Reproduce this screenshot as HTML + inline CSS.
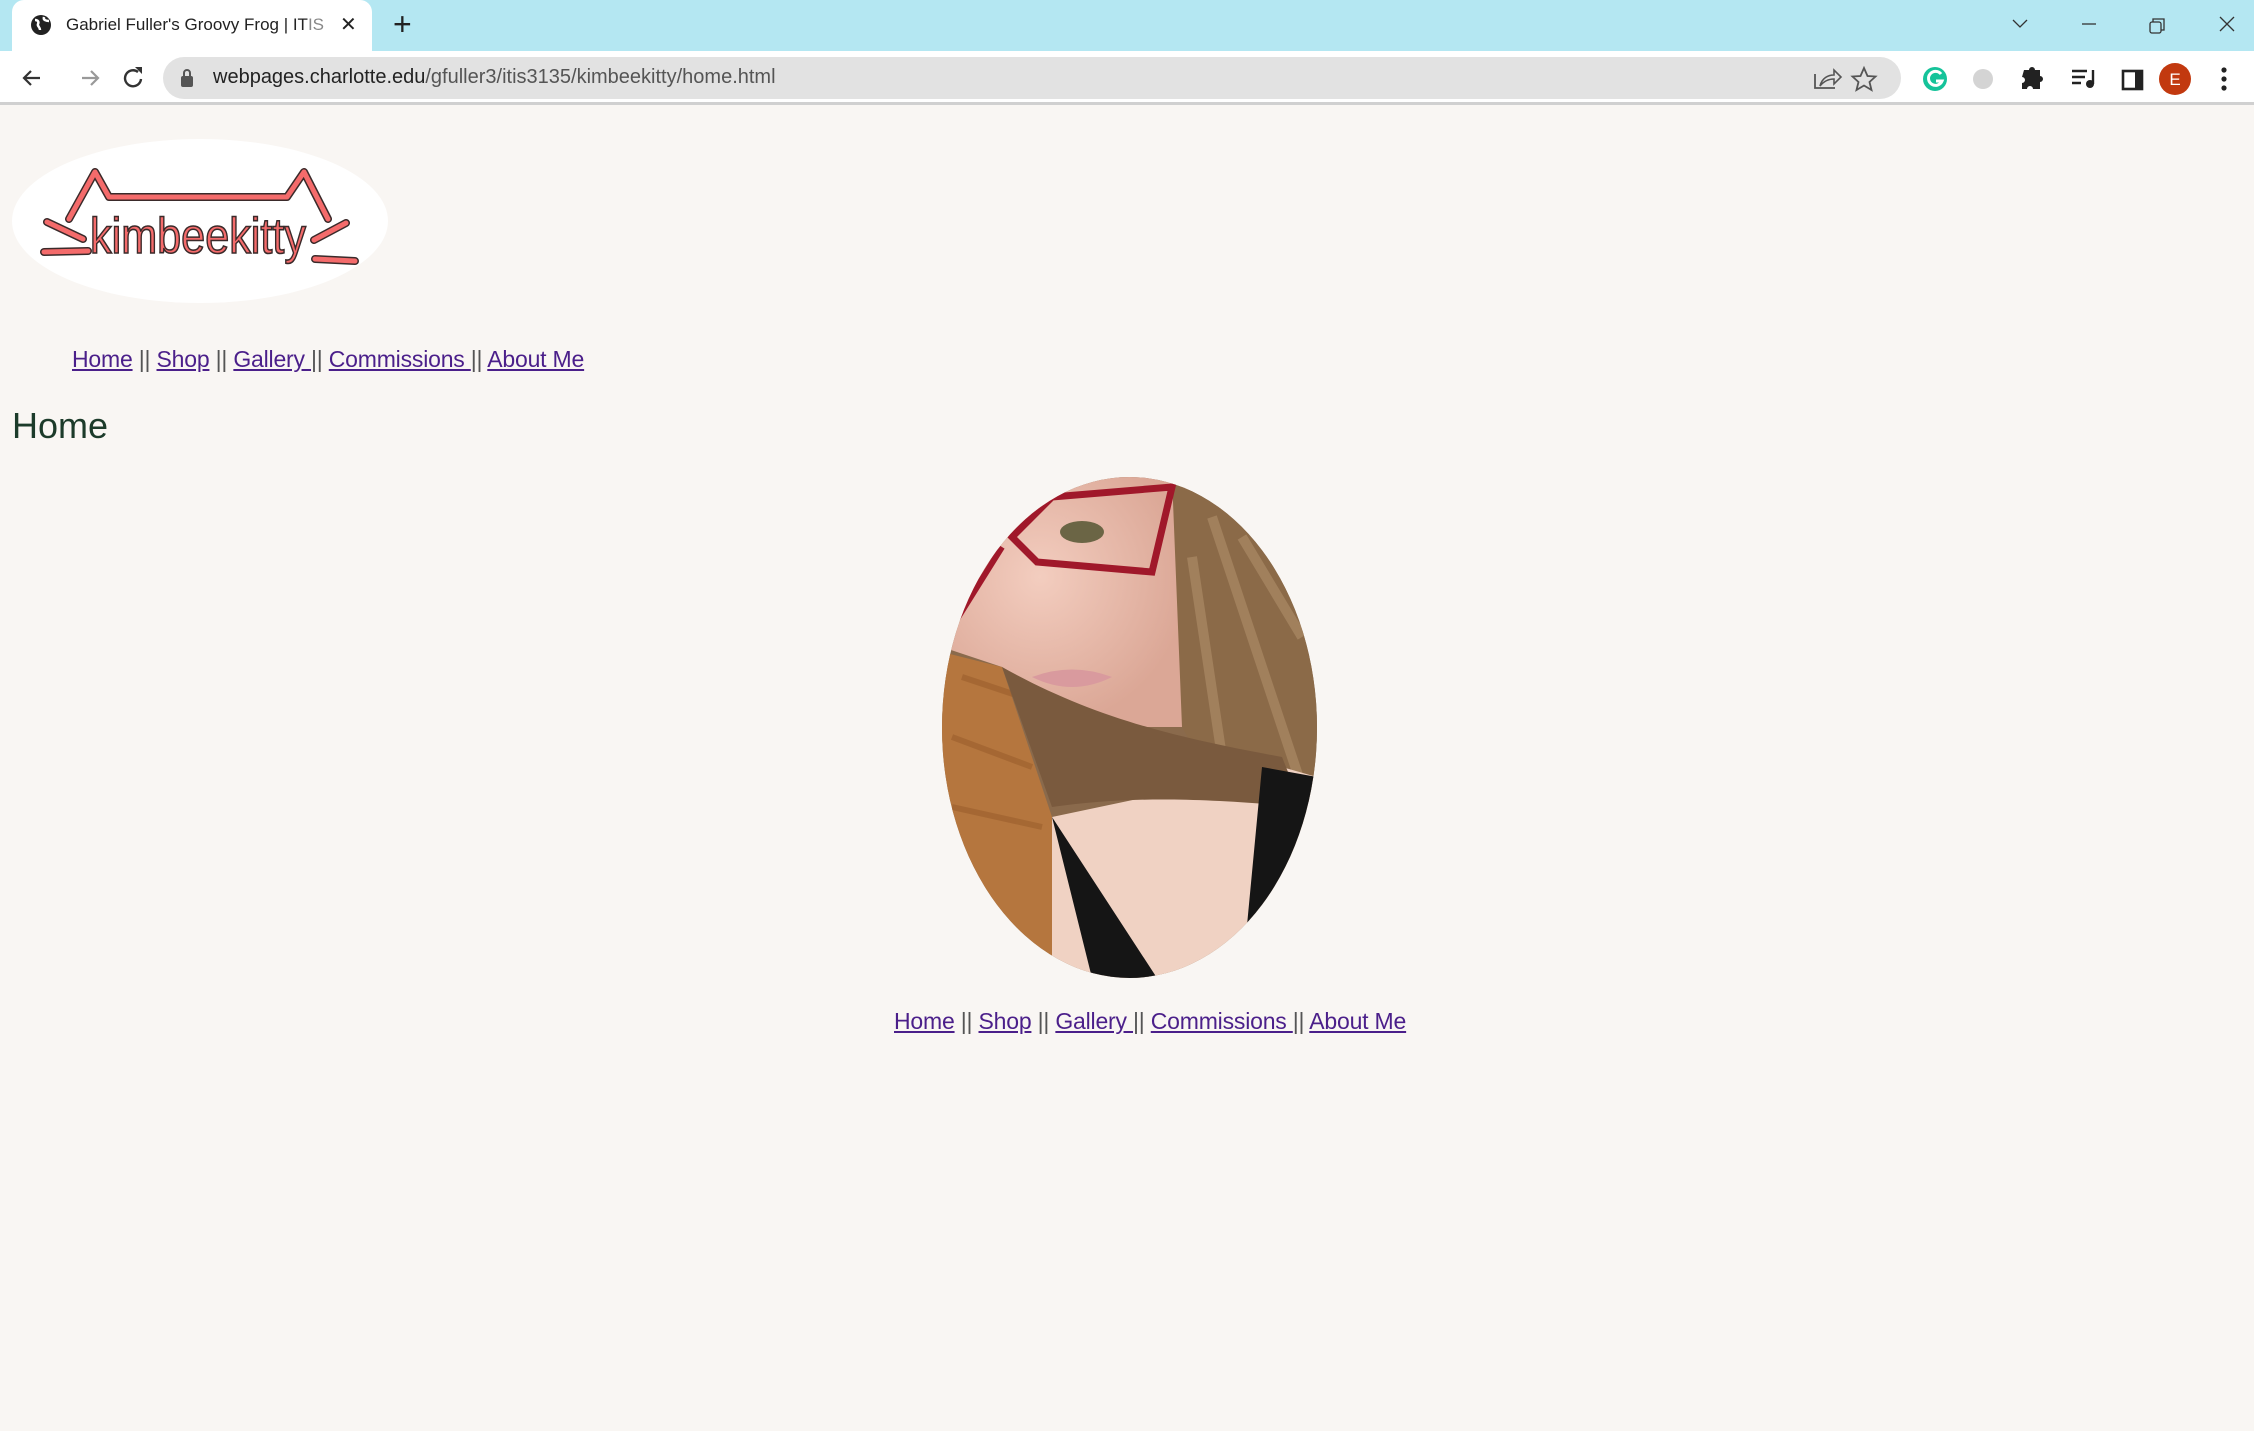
<!DOCTYPE html>
<html><head><meta charset="utf-8"><style>
*{margin:0;padding:0;box-sizing:border-box}
body{width:2254px;height:1431px;background:#f9f6f3;font-family:"Liberation Sans",sans-serif;position:relative;overflow:hidden}
.abs{position:absolute}
.tabbar{left:0;top:0;width:2254px;height:51px;background:#b4e7f2}
.tab{left:12px;top:0;width:360px;height:51px;background:#fff;border-radius:12px 12px 0 0}
.toolbar{left:0;top:51px;width:2254px;height:54px;background:#fff;border-bottom:3px solid #d0d0d0}
.addr{left:163px;top:57px;width:1738px;height:42px;background:#e2e2e2;border-radius:21px}
.nav{font-size:23px;color:#555;white-space:pre;letter-spacing:-0.2px}
.nav a{color:#4b1f8a;text-decoration:underline}
</style></head><body>
<div class="abs tabbar"></div>
<div class="abs tab"></div>
<svg class="abs" style="left:29px;top:13px" width="24" height="24" viewBox="0 0 24 24"><circle cx="12" cy="12" r="10" fill="#222"/><path d="M6 7c3 0 4 2 3 4s2 3 2 6M15 4c-1 3 2 4 5 4" stroke="#fff" stroke-width="2.5" fill="none"/></svg>
<div class="abs" style="left:66px;top:15px;font-size:17px;color:#222">Gabriel Fuller's Groovy Frog | IT<span style="color:#888">IS</span></div>
<div class="abs" style="left:340px;top:12px;font-size:20px;color:#222">✕</div>
<div class="abs" style="left:393px;top:6px;font-size:32px;color:#222">+</div>
<svg class="abs" style="left:2005px;top:12px" width="240" height="24"><path d="M8 8l7 7 7-7" stroke="#333" fill="none" stroke-width="1.3"/><path d="M77 12h14" stroke="#333" stroke-width="1.3"/><rect x="145" y="10" width="11" height="11" rx="2" stroke="#333" fill="none" stroke-width="1.3"/><path d="M148 10v-3h11v11h-3" stroke="#333" fill="none" stroke-width="1.3"/><path d="M215 5l14 14M229 5l-14 14" stroke="#333" stroke-width="1.3"/></svg>
<div class="abs toolbar"></div>
<svg class="abs" style="left:18px;top:64px" width="130" height="28"><path d="M22 14H6M13 7l-7 7 7 7" stroke="#333" stroke-width="2.2" fill="none"/><path d="M64 14h16M73 7l7 7-7 7" stroke="#999" stroke-width="2.2" fill="none"/><path d="M120 8A8 8 0 1 0 123 15" stroke="#333" stroke-width="2.4" fill="none"/><path d="M117 3h7v7z" fill="#333"/></svg>
<div class="abs addr"></div>
<svg class="abs" style="left:180px;top:68px" width="14" height="20"><rect x="1" y="8" width="12" height="11" rx="2" fill="#555"/><path d="M4 9V5a3 3 0 0 1 6 0v4" stroke="#555" stroke-width="2" fill="none"/></svg>
<div class="abs" style="left:213px;top:66px;font-size:20px;color:#222">webpages.charlotte.edu<span style="color:#555">/gfuller3/itis3135/kimbeekitty/home.html</span></div>
<svg class="abs" style="left:1812px;top:64px" width="70" height="30"><path d="M3 10v14h20" stroke="#555" stroke-width="1.8" fill="none"/><path d="M8 22c2-8 8-11 14-11V6l7 7-7 7v-5c-5 0-10 2-14 7z" stroke="#555" stroke-width="1.6" fill="none"/><path d="M62 4l3.5 8 8 .5-6 5.5 2 8-7.5-4.5-7.5 4.5 2-8-6-5.5 8-.5z" stroke="#555" stroke-width="1.8" fill="none" transform="translate(-10 0)"/></svg>
<svg class="abs" style="left:1920px;top:62px" width="320" height="34"><circle cx="15" cy="17" r="12" fill="#15c39a"/><path d="M21 12a7 7 0 1 0 1 7h-6" stroke="#fff" stroke-width="3" fill="none"/><circle cx="63" cy="17" r="10" fill="#d4d4d4"/><path d="M108 8h5a3 3 0 0 1 6 0h5v6a3 3 0 0 1 0 6v7h-7a3 3 0 0 0-6 0h-5v-6a3 3 0 0 0 0-6z" fill="#222" transform="translate(-4 0)"/><path d="M152 9h15M152 15h13M152 21h9" stroke="#222" stroke-width="2.4"/><path d="M173 8v14" stroke="#222" stroke-width="2.4"/><circle cx="170" cy="22" r="4" fill="#222"/><rect x="203" y="9" width="19" height="18" stroke="#222" stroke-width="2.6" fill="none"/><rect x="215" y="9" width="7" height="18" fill="#222"/><circle cx="255" cy="17" r="16" fill="#c2390f"/><text x="255" y="23" font-size="17" fill="#fff" text-anchor="middle" font-family="Liberation Sans">E</text><circle cx="304" cy="8" r="2.6" fill="#222"/><circle cx="304" cy="17" r="2.6" fill="#222"/><circle cx="304" cy="26" r="2.6" fill="#222"/></svg>

<svg class="abs" style="left:12px;top:139px" width="378" height="165" viewBox="0 0 378 165">
<ellipse cx="188" cy="82" rx="188" ry="82" fill="#fff"/>
<g stroke="#3a2a2a" stroke-width="8" fill="none" stroke-linecap="round" stroke-linejoin="round">
<path d="M57 80L83 33 97 58H275L292 33 316 80"/><path d="M35 83l36 17M32 113l44-1M334 84l-32 17M303 120l40 2"/></g>
<g stroke="#f46b6b" stroke-width="5" fill="none" stroke-linecap="round" stroke-linejoin="round">
<path d="M57 80L83 33 97 58H275L292 33 316 80"/><path d="M35 83l36 17M32 113l44-1M334 84l-32 17M303 120l40 2"/></g>
<text x="78" y="114" font-family="Liberation Sans Narrow,Liberation Sans,sans-serif" font-size="50" fill="#f46b6b" stroke="#3a2a2a" stroke-width="1.6" textLength="216" lengthAdjust="spacingAndGlyphs">kimbeekitty</text>
</svg>

<div class="abs nav" style="left:72px;top:346px"><a>Home</a> || <a>Shop</a> || <a>Gallery </a>|| <a>Commissions </a>|| <a>About Me</a></div>
<div class="abs" style="left:12px;top:405px;font-size:36px;color:#1c3b2a">Home</div>

<svg class="abs" style="left:942px;top:477px" width="375" height="501" viewBox="0 0 375 501">
<defs><clipPath id="c"><ellipse cx="187.5" cy="250.5" rx="187.5" ry="250.5"/></clipPath>
<radialGradient id="sk" cx="0.4" cy="0.4" r="0.6"><stop offset="0" stop-color="#f3cdbf"/><stop offset="1" stop-color="#dba796"/></radialGradient></defs>
<g clip-path="url(#c)">
<rect width="375" height="501" fill="#8a6a4c"/>
<path d="M0 0H245L240 250 160 250 60 190 0 170z" fill="url(#sk)"/>
<path d="M230 0H375V330L320 300 280 320 240 250z" fill="#8b6a48"/>
<path d="M270 40l40 120 50 150M250 80l30 200M300 60l60 100" stroke="#b0906a" stroke-width="10" fill="none" opacity=".6"/>
<path d="M0 175L60 190 110 340 110 501H0z" fill="#b5763e"/>
<path d="M20 200l60 20M10 260l80 30M10 330l90 20" stroke="#8e5425" stroke-width="6" opacity=".4"/>
<path d="M110 340L300 300 340 290 375 300V501H110z" fill="#f0d2c3"/>
<path d="M60 190C150 240 230 260 340 280L360 330C250 320 180 320 110 330z" fill="#7a5a3e"/>
<path d="M110 340L150 501H215zM320 290L375 300V450L300 501z" fill="#151515"/>
<path d="M95 85L210 95 230 10 110 20 70 60z" fill="none" stroke="#a0182a" stroke-width="7"/>
<path d="M10 150L60 70" stroke="#a0182a" stroke-width="6"/>
<ellipse cx="140" cy="55" rx="22" ry="11" fill="#6b6545"/>
<path d="M90 200q40-15 80 0q-40 20-80 0z" fill="#d99a9e"/>
</g></svg>

<div class="abs nav" style="left:894px;top:1008px"><a>Home</a> || <a>Shop</a> || <a>Gallery </a>|| <a>Commissions </a>|| <a>About Me</a></div>
</body></html>
